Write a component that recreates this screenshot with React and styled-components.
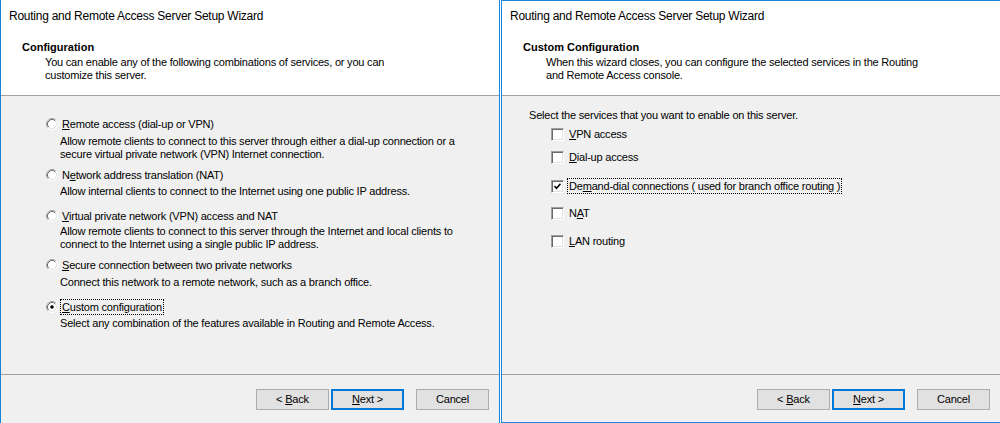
import React from "react";
import styled, { createGlobalStyle } from "styled-components";

const GlobalStyle = createGlobalStyle`
  html, body {
    margin: 0;
    padding: 0;
    background: #fff;
    overflow: hidden;
  }
  body {
    font-family: "Liberation Sans", Arial, sans-serif;
    font-size: 11px;
    letter-spacing: -0.2px;
    color: #000;
  }
`;

const ACCENT = "#1883d7";

const Desktop = styled.div`
  display: flex;
  gap: 1px;
  width: 1001px;
  height: 423px;
`;

const Window = styled.div`
  box-sizing: border-box;
  flex: 0 0 500px;
  display: flex;
  flex-direction: column;
  height: 423px;
  background: #fff;
  border-left: 1px solid ${ACCENT};
  border-right: 1px solid ${ACCENT};
  border-top: ${p => (p.$framed ? `1px solid ${ACCENT}` : "none")};
  border-bottom: ${p => (p.$framed ? `1px solid ${ACCENT}` : "none")};
`;

const Header = styled.div`
  height: ${p => (p.$framed ? 95 : 96)}px;
  padding-top: ${p => (p.$framed ? 7 : 8)}px;
  box-sizing: border-box;
  border-bottom: 1px solid #a0a0a0;
  background: #fff;
  flex-shrink: 0;
`;

const Caption = styled.div`
  padding-left: 8px;
  font-size: 12px;
  letter-spacing: -0.25px;
  line-height: 16px;
`;

const Heading = styled.div`
  margin-top: 17px;
  padding-left: 21px;
  font-weight: bold;
  letter-spacing: 0;
  line-height: 13px;
`;

const Subtitle = styled.div`
  margin-top: 2px;
  padding-left: 44px;
  line-height: 13px;
`;

const Body = styled.div`
  height: 278px;
  box-sizing: border-box;
  background: #f0f0f0;
  padding: ${p => p.$pad};
  flex-shrink: 0;
`;

const Option = styled.div`
  margin-top: ${p => p.$mt}px;
`;

const LabelRow = styled.div`
  display: flex;
  align-items: center;
  gap: 3px;
  height: ${p => p.$h || 14}px;
  margin-top: ${p => p.$mt || 0}px;
`;

const Label = styled.span`
  padding: 0 1px;
  line-height: 14px;
  outline: ${p => (p.$focus ? "1px dotted #000" : "none")};
  outline-offset: 0;
`;

const Key = styled.u`
  text-decoration: underline;
  text-underline-offset: 1px;
`;

const Desc = styled.div`
  margin-top: ${p => p.$mt}px;
  padding-left: 14px;
  line-height: 13px;
`;

const Intro = styled.div`
  line-height: 14px;
`;

const CheckList = styled.div`
  padding-left: 22px;
`;

const CheckBox = styled.span`
  box-sizing: border-box;
  flex: 0 0 13px;
  width: 13px;
  height: 13px;
  display: flex;
  align-items: center;
  justify-content: center;
  background: #fff;
  border-top: 1px solid #a0a0a0;
  border-left: 1px solid #a0a0a0;
  border-bottom: 1px solid #fff;
  border-right: 1px solid #fff;
  box-shadow: inset 1px 1px 0 #696969, inset -1px -1px 0 #e3e3e3;
  margin-right: 1px;
`;

const Footer = styled.div`
  flex: 1;
  display: flex;
  justify-content: flex-end;
  align-items: flex-start;
  padding: 14px 10px 0 0;
  background: #f0f0f0;
  border-top: 1px solid #a0a0a0;
`;

const Button = styled.div`
  box-sizing: border-box;
  width: 73px;
  height: 21px;
  margin-left: ${p => p.$ml}px;
  display: flex;
  align-items: center;
  justify-content: center;
  background: #e1e1e1;
  border: ${p => (p.$default ? "2px solid #0078d7" : "1px solid #adadad")};
  line-height: 13px;
  white-space: pre;
`;

const Radio = ({ checked }) => (
  <svg width="12" height="12" viewBox="0 0 12 12" style={{ flex: "0 0 12px" }}>
    <circle cx="6" cy="6" r="5" fill="#fff" />
    <path d="M2.11 9.89 A5.5 5.5 0 0 1 9.89 2.11" fill="none" stroke="#a0a0a0" />
    <path d="M9.89 2.11 A5.5 5.5 0 0 1 2.11 9.89" fill="none" stroke="#fff" />
    <path d="M2.82 9.18 A4.5 4.5 0 0 1 9.18 2.82" fill="none" stroke="#696969" />
    <path d="M9.18 2.82 A4.5 4.5 0 0 1 2.82 9.18" fill="none" stroke="#e3e3e3" />
    {checked && <circle cx="6" cy="6" r="1.8" fill="#000" />}
  </svg>
);

const Tick = () => (
  <svg width="9" height="9" viewBox="0 0 9 9">
    <polyline points="1.5,4 3.5,6.2 7.5,1.8" fill="none" stroke="#000" strokeWidth="1.6" />
  </svg>
);

const options = [
  {
    mt: 0, dg: 4,
    label: <><Key>R</Key>emote access (dial-up or VPN)</>,
    desc: ["Allow remote clients to connect to this server through either a dial-up connection or a", "secure virtual private network (VPN) Internet connection."],
  },
  {
    mt: 7, dg: 3,
    label: <>N<Key>e</Key>twork address translation (NAT)</>,
    desc: ["Allow internal clients to connect to the Internet using one public IP address."],
  },
  {
    mt: 11, dg: 2,
    label: <><Key>V</Key>irtual private network (VPN) access and NAT</>,
    desc: ["Allow remote clients to connect to this server through the Internet and local clients to", "connect to the Internet using a single public IP address."],
  },
  {
    mt: 7, dg: 4,
    label: <><Key>S</Key>ecure connection between two private networks</>,
    desc: ["Connect this network to a remote network, such as a branch office."],
  },
  {
    mt: 11, dg: 3, checked: true,
    label: <><Key>C</Key>ustom configuration</>,
    desc: ["Select any combination of the features available in Routing and Remote Access."],
  },
];

const services = [
  { mt: 4, label: <><Key>V</Key>PN access</> },
  { mt: 7, label: <><Key>D</Key>ial-up access</> },
  { mt: 13, checked: true, label: <>De<Key>m</Key>and-dial connections ( used for branch office routing )</> },
  { mt: 11, label: <>N<Key>A</Key>T</> },
  { mt: 12, label: <><Key>L</Key>AN routing</> },
];

const Buttons = () => (
  <Footer>
    <Button $ml={0}>
      <span>{"< "}<Key>B</Key>ack</span>
    </Button>
    <Button $ml={2} $default>
      <span><Key>N</Key>{"ext >"}</span>
    </Button>
    <Button $ml={12}>
      <span>Cancel</span>
    </Button>
  </Footer>
);

const ConfigurationPage = () => (
  <Window>
    <Header>
      <Caption>Routing and Remote Access Server Setup Wizard</Caption>
      <Heading>Configuration</Heading>
      <Subtitle>
        You can enable any of the following combinations of services, or you can
        <br />
        customize this server.
      </Subtitle>
    </Header>
    <Body $pad="21px 0 0 45px">
      {options.map((o, i) => (
        <Option key={i} $mt={o.mt}>
          <LabelRow>
            <Radio checked={o.checked} />
            <Label $focus={o.checked}>{o.label}</Label>
          </LabelRow>
          <Desc $mt={o.dg}>
            {o.desc.map((line, j) => (
              <div key={j}>{line}</div>
            ))}
          </Desc>
        </Option>
      ))}
    </Body>
    <Buttons />
  </Window>
);

const CustomPage = () => (
  <Window $framed>
    <Header $framed>
      <Caption>Routing and Remote Access Server Setup Wizard</Caption>
      <Heading>Custom Configuration</Heading>
      <Subtitle>
        When this wizard closes, you can configure the selected services in the Routing
        <br />
        and Remote Access console.
      </Subtitle>
    </Header>
    <Body $pad="12px 0 0 27px">
      <Intro>Select the services that you want to enable on this server.</Intro>
      <CheckList>
        {services.map((s, i) => (
          <LabelRow key={i} $h={16} $mt={s.mt}>
            <CheckBox>{s.checked && <Tick />}</CheckBox>
            <Label $focus={s.checked}>{s.label}</Label>
          </LabelRow>
        ))}
      </CheckList>
    </Body>
    <Buttons />
  </Window>
);

export default function App() {
  return (
    <>
      <GlobalStyle />
      <Desktop>
        <ConfigurationPage />
        <CustomPage />
      </Desktop>
    </>
  );
}
